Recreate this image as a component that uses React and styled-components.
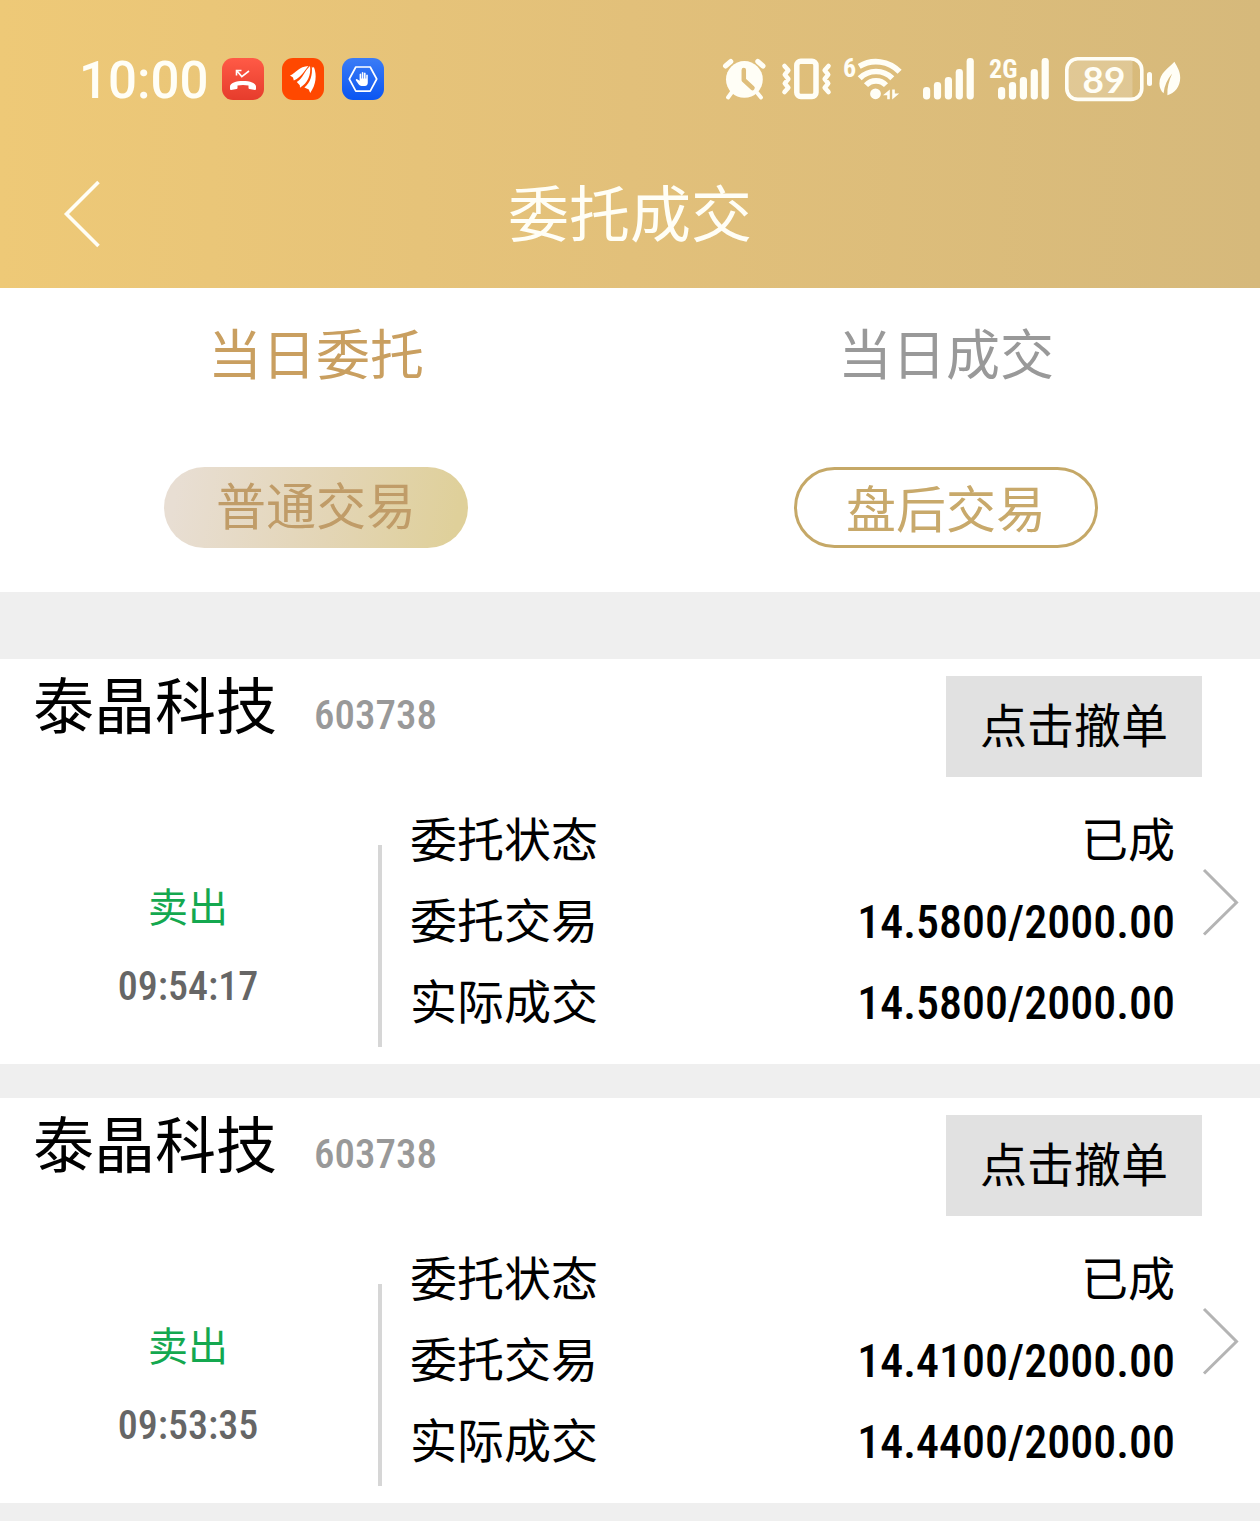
import React from "react";
import styled, { createGlobalStyle } from "styled-components";
import { FaHand } from "react-icons/fa6";

const GlobalStyle = createGlobalStyle`
    * {
        box-sizing: border-box;
    }

    body {
        margin: 0;
        background: #efefef;
        color: #000;
        font-family: "Noto Sans CJK SC", sans-serif;
    }

    button {
        margin: 0;
        padding: 0;
        border: none;
        background: none;
        color: inherit;
        font: inherit;
        cursor: pointer;
    }
`;

const numberFont = `"Roboto Condensed", "Liberation Sans Narrow", "Noto Sans CJK SC", sans-serif`;

const Header = styled.header`
    background: linear-gradient(90deg, #eec977 0%, #e2c07a 50%, #d6b97b 100%);
    color: #fffef6;
`;

const StatusBar = styled.div`
    display: flex;
    align-items: center;
    justify-content: space-between;
    height: 140px;
    padding: 17px 79px 0;
`;

const StatusGroup = styled.div`
    display: flex;
    align-items: center;
    gap: ${({ $gap }) => $gap}px;
`;

const Clock = styled.span`
    margin-right: -4px;
    padding-top: 4px;
    font-family: Roboto, sans-serif;
    font-size: 51px;
    font-weight: 500;
    line-height: 60px;
`;

const Icon = styled.svg`
    display: block;
    flex: none;
    overflow: visible;
`;

const IconText = styled.text`
    fill: currentColor;
    font-family: "Roboto Condensed", "Liberation Sans Narrow", Roboto, sans-serif;
    font-weight: 700;
`;

const BatteryText = styled(IconText)`
    font-family: Lato, sans-serif;
`;

const NavBar = styled.div`
    display: grid;
    grid-template-columns: 1fr auto 1fr;
    align-items: center;
    height: 148px;
    padding: 0 60px;
`;

const BackButton = styled.button`
    justify-self: start;
`;

const PageTitle = styled.h1`
    margin: 0;
    padding-bottom: 6px;
    font-size: 61px;
    font-weight: 400;
    line-height: 80px;
`;

const Filters = styled.section`
    padding-bottom: 44px;
    background: #fff;
`;

const TwoColumns = styled.div`
    display: grid;
    grid-template-columns: 1fr 1fr;
    gap: 2px;
    justify-items: center;
    padding-left: 2px;
`;

const Tab = styled.button`
    height: 132px;
    margin-bottom: 47px;
    padding-bottom: 6px;
    font-size: 54px;
    color: ${({ $active }) => ($active ? "#c99f60" : "#999")};
`;

const Pill = styled.button`
    display: flex;
    justify-content: center;
    width: 304px;
    height: 81px;
    border-radius: 41px;
    font-size: 50px;
    line-height: 72px;
    color: ${({ $active }) => ($active ? "#c09c68" : "#c8a96b")};
    border: ${({ $active }) => ($active ? "none" : "3px solid #c5a867")};
    background: ${({ $active }) =>
        $active ? "linear-gradient(100deg, #e8ded3 5%, #e3d5b5 55%, #dfd09a 95%)" : "#fff"};
`;

const OrderList = styled.main`
    display: flex;
    flex-direction: column;
    gap: 34px;
    padding: 67px 0 18px;
`;

const OrderCard = styled.article`
    padding: 17px 0;
    background: #fff;
`;

const OrderHead = styled.div`
    display: flex;
    justify-content: space-between;
    align-items: flex-start;
    padding: 0 58px 22px 33px;
`;

const Stock = styled.div`
    display: flex;
    align-items: baseline;
    gap: 37px;
`;

const StockName = styled.h2`
    margin: 0;
    font-size: 61px;
    font-weight: 400;
    line-height: 54px;
`;

const StockCode = styled.span`
    font-family: ${numberFont};
    font-size: 41px;
    font-weight: 500;
    line-height: 54px;
    color: #999;
`;

const CancelButton = styled.button`
    width: 256px;
    height: 101px;
    padding-bottom: 8px;
    background: #e1e1e1;
    font-size: 47px;
    line-height: 60px;
`;

const OrderBody = styled.div`
    display: flex;
    align-items: flex-start;
`;

const Side = styled.div`
    flex: 0 0 30%;
    padding: 66px 2px 0 0;
    font-size: 40px;
    line-height: 81px;
    text-align: center;
`;

const Direction = styled.div`
    color: #14a84f;
`;

const Time = styled.div`
    font-family: ${numberFont};
    font-weight: 500;
    color: #666;
`;

const Divider = styled.div`
    width: 4px;
    height: 202px;
    margin-top: 46px;
    background: #d6d6d6;
`;

const Details = styled.dl`
    flex: 1;
    margin: 0;
    padding: 0 26px 0 28px;
    font-size: 47px;
    line-height: 76px;
`;

const DetailRow = styled.div`
    display: flex;
    justify-content: space-between;
    height: 81px;

    dd {
        margin: 0;
    }
`;

const Amount = styled.span`
    font-family: ${numberFont};
    font-size: 46px;
    font-weight: 500;
`;

const OpenButton = styled.button`
    margin: 68px 21px 0 0;
`;

const orders = [
    {
        name: "泰晶科技",
        code: "603738",
        direction: "卖出",
        time: "09:54:17",
        status: "已成",
        entrusted: "14.5800/2000.00",
        filled: "14.5800/2000.00",
    },
    {
        name: "泰晶科技",
        code: "603738",
        direction: "卖出",
        time: "09:53:35",
        status: "已成",
        entrusted: "14.4100/2000.00",
        filled: "14.4400/2000.00",
    },
];

const MissedCallIcon = () => (
    <Icon width="42" height="42" viewBox="0 0 42 42">
        <defs>
            <linearGradient id="call" x1="0" y1="0" x2="0" y2="1">
                <stop offset="0" stopColor="#ff5a46" />
                <stop offset="1" stopColor="#e63c2c" />
            </linearGradient>
        </defs>
        <rect width="42" height="42" rx="11" fill="url(#call)" />
        <path d="M14.5 17.5V12.5H19.5M14.8 12.8L19.8 18.6L27 13" fill="none" stroke="#fff" strokeWidth="1.6" />
        <path
            d="M8 28.5C8 25 14 23 21 23S34 25 34 28.5V31Q34 32 33 32L27.5 31Q26.6 30.8 26.5 30V27.6Q21 26.2 15.5 27.6V30Q15.4 30.8 14.5 31L9 32Q8 32 8 31Z"
            fill="#fff"
        />
    </Icon>
);

const FeatherIcon = () => (
    <Icon width="42" height="42" viewBox="0 0 42 42">
        <rect width="42" height="42" rx="11" fill="#ff4800" />
        <g fill="#fff">
            <path d="M8 17.5C14 15 17 8.4 26.5 8C23 11.5 20.5 18.5 11.8 22.6L11 19.5Z" />
            <path d="M28 8C29.4 17 25.5 25 18 29.8L17.8 27.2L14.8 24C20.8 20.5 22.5 13 28 8Z" />
            <path d="M29.8 8.5L31 10L31.8 8.8C35.2 17 34 27 28.2 35L26.8 31.4L22.4 29.6C28.6 24.5 30.6 17 29.8 8.5Z" />
        </g>
    </Icon>
);

const BlockIcon = () => (
    <Icon width="42" height="42" viewBox="0 0 42 42">
        <defs>
            <linearGradient id="block" x1="0" y1="0" x2="0" y2="1">
                <stop offset="0" stopColor="#3b7cf6" />
                <stop offset="1" stopColor="#0a55f2" />
            </linearGradient>
        </defs>
        <rect width="42" height="42" rx="11" fill="url(#block)" />
        <path d="M7.3 21L13.8 9H28.2L34.7 21L28.2 33.2H13.8Z" fill="none" stroke="#fff" strokeWidth="1.7" strokeLinejoin="round" />
        <path
            d="M16.6 26.2L13.8 22.2Q13.6 21 14.8 21L17.6 22.8V16.2Q18.4 15 19.2 16.2V20.6H19.8V14.6Q20.6 13.4 21.4 14.6V20.6H22V15Q22.8 13.8 23.6 15V20.6H24.2V17Q25 15.8 25.8 17V24.6Q25.8 28 22.8 28H19.6Q17.8 28 16.6 26.2Z"
            fill="#fff"
        />
    </Icon>
);

const AlarmIcon = () => (
    <Icon width="48" height="44" viewBox="0 0 48 44" stroke="currentColor" strokeLinecap="round" fill="none">
        <path d="M3.5 9L8.8 4.5M35.8 4.5L41 9" strokeWidth="5" />
        <path d="M10 35L6 40.5M34.5 35L39 40.5" strokeWidth="4" />
        <circle cx="22.4" cy="22.4" r="18.4" fill="currentColor" stroke="none" />
        <path d="M21.8 13V23L30.5 31" stroke="#dfbe7b" strokeWidth="4.5" strokeLinejoin="round" />
    </Icon>
);

const VibrateIcon = () => (
    <Icon width="50" height="44" viewBox="0 0 50 44" stroke="currentColor" fill="none" strokeLinecap="round" strokeLinejoin="round">
        <rect x="14.8" y="4.2" width="19.2" height="35.4" rx="4" strokeWidth="5.5" />
        <path
            d="M2.5 9L6.3 13.3L2.8 17.6L6.3 22L2.8 26.4L6.3 30.7L2.5 35M46.5 9L42.7 13.3L46.2 17.6L42.7 22L46.2 26.4L42.7 30.7L46.5 35"
            strokeWidth="4.6"
        />
    </Icon>
);

const WifiIcon = () => (
    <Icon width="67" height="44" viewBox="0 0 67 44">
        <g fill="none" stroke="currentColor" strokeWidth="5.6">
            <path d="M15.2 9.4A32.5 32.5 0 0 1 55.6 14.8" />
            <path d="M15.7 21.2A23 23 0 0 1 48.3 21.2" />
            <path d="M22 28.2A13.7 13.7 0 0 1 42 28.2" />
        </g>
        <circle cx="31.5" cy="36.8" r="5.4" fill="currentColor" />
        <path d="M39 38.2L45.8 32.6V42.2H43.2V38.2ZM48.2 32.6H50.8V36.4H55.2L48.2 42.4Z" fill="currentColor" />
        <IconText x="-1" y="20" fontSize="26">6</IconText>
    </Icon>
);

const barTops = [30, 25, 20, 12, 1];

const SignalBars = ({ offset = 0 }) =>
    barTops.map((top, i) => (
        <rect key={top} x={offset + i * 10.9} y={top} width="7.2" height={42.4 - top} rx="3.4" fill="currentColor" />
    ));

const SignalIcon = () => (
    <Icon width="55" height="44" viewBox="0 0 55 44">
        <SignalBars />
    </Icon>
);

const Signal2GIcon = () => (
    <Icon width="63" height="44" viewBox="0 0 63 44">
        <SignalBars offset={8} />
        <IconText x="-1" y="21" fontSize="26">2G</IconText>
    </Icon>
);

const BatteryIcon = () => (
    <Icon width="116" height="44" viewBox="0 0 116 44">
        <path d="M12 2H67.5V42H12A10 10 0 0 1 2 32V12A10 10 0 0 1 12 2Z" fill="#fff" opacity="0.2" />
        <rect x="1.8" y="1.8" width="75" height="40.6" rx="11" fill="none" stroke="currentColor" strokeWidth="3.6" />
        <rect x="82" y="15" width="5" height="14" rx="2.5" fill="currentColor" />
        <BatteryText x="39" y="36" fontSize="37" textAnchor="middle">89</BatteryText>
        <path
            d="M109.4 4.8C104 11 94.4 16 94.4 26.5C94.4 30.5 96 34.2 98.6 36.2C99.4 29 102.2 22.5 107.2 16.6C103.8 24 102 31 102.4 38.2C109.5 36.5 115.2 30 115.2 20.8C115.2 14.5 112.3 10 109.4 4.8Z"
            fill="currentColor"
        />
    </Icon>
);

const Order = ({ order }) => (
    <OrderCard>
        <OrderHead>
            <Stock>
                <StockName>{order.name}</StockName>
                <StockCode>{order.code}</StockCode>
            </Stock>
            <CancelButton type="button">点击撤单</CancelButton>
        </OrderHead>
        <OrderBody>
            <Side>
                <Direction>{order.direction}</Direction>
                <Time>{order.time}</Time>
            </Side>
            <Divider />
            <Details>
                <DetailRow>
                    <dt>委托状态</dt>
                    <dd>{order.status}</dd>
                </DetailRow>
                <DetailRow>
                    <dt>委托交易</dt>
                    <dd><Amount>{order.entrusted}</Amount></dd>
                </DetailRow>
                <DetailRow>
                    <dt>实际成交</dt>
                    <dd><Amount>{order.filled}</Amount></dd>
                </DetailRow>
            </Details>
            <OpenButton type="button" aria-label="查看详情">
                <Icon width="38" height="70" viewBox="0 0 38 70" fill="none" stroke="#b4b4b4" strokeWidth="3">
                    <path d="M3 3L35.5 35.5L3 67.5" />
                </Icon>
            </OpenButton>
        </OrderBody>
    </OrderCard>
);

const App = () => {
    return (
        <>
            <GlobalStyle />
            <Header>
                <StatusBar>
                    <StatusGroup $gap={18}>
                        <Clock>10:00</Clock>
                        <MissedCallIcon />
                        <FeatherIcon />
                        <BlockIcon />
                    </StatusGroup>
                    <StatusGroup $gap={12}>
                        <AlarmIcon />
                        <VibrateIcon />
                        <WifiIcon />
                        <SignalIcon />
                        <Signal2GIcon />
                        <BatteryIcon />
                    </StatusGroup>
                </StatusBar>
                <NavBar>
                    <BackButton type="button" aria-label="返回">
                        <Icon width="44" height="70" viewBox="0 0 44 70" fill="none" stroke="currentColor" strokeWidth="3.6">
                            <path d="M38.5 3L6.5 35L38.5 67" />
                        </Icon>
                    </BackButton>
                    <PageTitle>委托成交</PageTitle>
                </NavBar>
            </Header>
            <Filters>
                <TwoColumns>
                    <Tab type="button" $active>当日委托</Tab>
                    <Tab type="button">当日成交</Tab>
                </TwoColumns>
                <TwoColumns>
                    <Pill type="button" $active>普通交易</Pill>
                    <Pill type="button">盘后交易</Pill>
                </TwoColumns>
            </Filters>
            <OrderList>
                {orders.map((order) => (
                    <Order key={order.time} order={order} />
                ))}
            </OrderList>
        </>
    );
};

export default App;
